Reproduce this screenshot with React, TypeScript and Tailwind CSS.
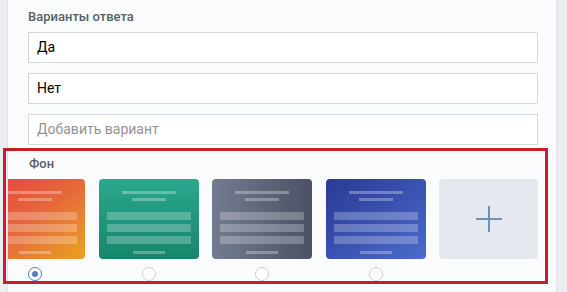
import React from "react";

type Theme = {
  bg: string;
};

const themes: Theme[] = [
  { bg: "bg-linear-to-br from-[#e5413f] via-[#e6683a] to-[#e7a219]" },
  { bg: "bg-linear-to-b from-[#2aa88d] to-[#15866c]" },
  { bg: "bg-linear-to-r from-[#747c8f] to-[#4b5264]" },
  { bg: "bg-linear-to-br from-[#2a3994] to-[#4c6bcc]" },
];

function ThemeCard({ bg }: Theme) {
  return (
    <div className={`w-[100px] h-[80px] rounded-[4px] shrink-0 flex flex-col items-center ${bg}`}>
      <div className="mt-[12px] h-[3px] w-[54px] bg-white/30" />
      <div className="mt-[4px] h-[3px] w-[34px] bg-white/30" />
      <div className="mt-[11px] flex flex-col gap-[4px] w-[84px]">
        <div className="h-[8px] rounded-[1px] bg-white/25" />
        <div className="h-[8px] rounded-[1px] bg-white/25" />
        <div className="h-[8px] rounded-[1px] bg-white/25" />
      </div>
      <div className="mt-[7px] h-[3px] w-[32px] bg-white/30" />
    </div>
  );
}

function Radio({ checked }: { checked?: boolean }) {
  return (
    <div className="w-[100px] shrink-0 flex justify-center">
      <div
        className={`w-[14px] h-[14px] rounded-full border bg-white flex items-center justify-center ${
          checked ? "border-[#5181b8]" : "border-[#c9ced6]"
        }`}
      >
        {checked && <div className="w-[6px] h-[6px] rounded-full bg-[#5181b8]" />}
      </div>
    </div>
  );
}

function Field({ value, placeholder }: { value?: string; placeholder?: string }) {
  return (
    <div className="h-[31px] w-[510px] border border-[#d3d9de] bg-white flex items-center pl-[8px] text-[14px]">
      {value ? (
        <span className="text-[#000]">{value}</span>
      ) : (
        <span className="text-[#939393]">{placeholder}</span>
      )}
    </div>
  );
}

export default function App() {
  return (
    <div
      className="w-[567px] h-[292px] bg-[#ebedf0] overflow-hidden flex"
      style={{ fontFamily: "Roboto, 'Noto Sans', sans-serif" }}
    >
      <div className="ml-[7px] w-[550px] h-full bg-[#fafbfc] border-l border-r border-[#e1e3e6] relative">
        <div className="pl-[20px] pt-[9px]">
          <div className="text-[13px] font-medium text-[#5a5f66] leading-[16px]">
            Варианты ответа
          </div>
          <div className="mt-[7px] flex flex-col gap-[10px]">
            <Field value="Да" />
            <Field value="Нет" />
            <Field placeholder="Добавить вариант" />
          </div>
        </div>

        <div className="mt-[11px]">
          <div className="pl-[21px] text-[13px] font-medium text-[#5a5f66] leading-[16px]">Фон</div>
          <div className="mt-[7px] overflow-hidden">
            <div className="flex gap-[13.5px] ml-[-23px]">
              {themes.map((t, i) => (
                <ThemeCard key={i} bg={t.bg} />
              ))}
              <div className="w-[99px] h-[80px] rounded-[4px] shrink-0 bg-[#e5e8ee] flex items-center justify-center">
                <svg width="28" height="28" viewBox="0 0 28 28">
                  <path d="M14 1v26M1 14h26" stroke="#7190b3" strokeWidth="2" fill="none" />
                </svg>
              </div>
            </div>
            <div className="flex gap-[13.5px] ml-[-23px] mt-[8px]">
              <Radio checked />
              <Radio />
              <Radio />
              <Radio />
            </div>
          </div>
        </div>

        <div className="absolute left-[-5px] top-[148px] w-[545px] h-[136px] border-[3px] border-[#c81e2c] pointer-events-none" />
      </div>
    </div>
  );
}
